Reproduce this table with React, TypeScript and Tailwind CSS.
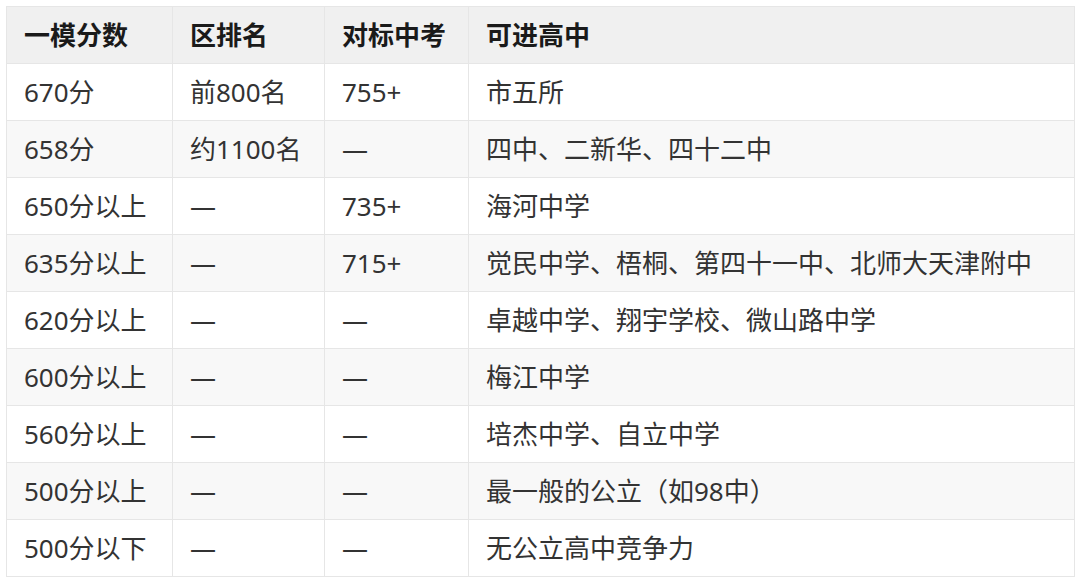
const rows: string[][] = [
  ["670分", "前800名", "755+", "市五所"],
  ["658分", "约1100名", "—", "四中、二新华、四十二中"],
  ["650分以上", "—", "735+", "海河中学"],
  ["635分以上", "—", "715+", "觉民中学、梧桐、第四十一中、北师大天津附中"],
  ["620分以上", "—", "—", "卓越中学、翔宇学校、微山路中学"],
  ["600分以上", "—", "—", "梅江中学"],
  ["560分以上", "—", "—", "培杰中学、自立中学"],
  ["500分以上", "—", "—", "最一般的公立（如98中）"],
  ["500分以下", "—", "—", "无公立高中竞争力"],
];

const headers = ["一模分数", "区排名", "对标中考", "可进高中"];

export default function App() {
  return (
    <div
      className="w-[1080px] h-[588px] bg-white pt-[6px] pl-[6px]"
      style={{ fontFamily: '"Noto Sans", "Noto Sans CJK SC", sans-serif' }}
    >
      <table className="table-fixed border-collapse w-[1068px] text-[26px] text-[#333]">
        <colgroup>
          <col className="w-[166px]" />
          <col className="w-[152px]" />
          <col className="w-[144px]" />
          <col className="w-[606px]" />
        </colgroup>
        <thead>
          <tr className="bg-[#f0f0f0]">
            {headers.map((h) => (
              <th
                key={h}
                className="h-[57px] border border-[#e6e6e6] px-[17px] text-left font-bold text-[#1a1a1a] leading-none"
              >
                {h}
              </th>
            ))}
          </tr>
        </thead>
        <tbody>
          {rows.map((r, i) => (
            <tr key={i} className={i % 2 === 1 ? "bg-[#f8f8f8]" : "bg-white"}>
              {r.map((c, j) => (
                <td
                  key={j}
                  className="h-[57px] border border-[#e6e6e6] px-[17px] leading-none whitespace-nowrap"
                >
                  {c}
                </td>
              ))}
            </tr>
          ))}
        </tbody>
      </table>
    </div>
  );
}
